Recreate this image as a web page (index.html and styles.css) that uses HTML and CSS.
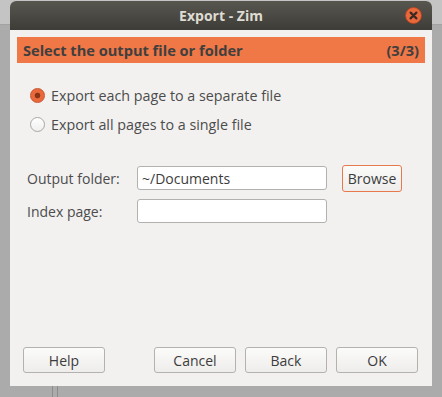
FILE: index.html
```html
<!DOCTYPE html>
<html>
<head>
  <meta charset="utf-8">
  <title>Export - Zim</title>
  <link rel="stylesheet" href="styles.css">
</head>
<body>

<div class="desk">
  <div class="dialog">

    <!-- title bar -->
    <div class="titlebar">
      <span class="title">Export - Zim</span>
      <span class="close">
        <svg width="17" height="17" viewBox="0 0 17 17">
          <circle cx="8.5" cy="8.5" r="8" fill="#e9683c" stroke="#b8421c" stroke-width="0.8"/>
          <path d="M5.6 5.6 L11.4 11.4 M11.4 5.6 L5.6 11.4" stroke="#3a2a22" stroke-width="2.2" stroke-linecap="round"/>
        </svg>
      </span>
    </div>

    <div class="body">
      <div class="banner">
        <span>Select the output file or folder</span>
        <span>(3/3)</span>
      </div>

      <div class="choices">
        <label class="choice"><span class="radio on"></span>Export each page to a separate file</label>
        <label class="choice"><span class="radio"></span>Export all pages to a single file</label>
      </div>

      <div class="form">
        <div class="row">
          <span class="lbl">Output folder:</span>
          <div class="entry">~/Documents</div>
          <div class="btn browse">Browse</div>
        </div>
        <div class="row">
          <span class="lbl">Index page:</span>
          <div class="entry"></div>
        </div>
      </div>

      <div class="actions">
        <div class="btn">Help</div>
        <div class="spacer"></div>
        <div class="btn">Cancel</div>
        <div class="btn">Back</div>
        <div class="btn">OK</div>
      </div>
    </div>

  </div>
  <div class="under"></div>
</div>

</body>
</html>
```

FILE: styles.css
```css
body {
  margin: 0;
  background: #ababab;
  font-family: "Open Sans", "DejaVu Sans", sans-serif;
  color: #4c4c4c;
}

.desk {
  padding: 1px 10px 0 10px;
  height: 396px;
  background: linear-gradient(#c4c4c4 0, #c4c4c4 24px, #a3a3a3 24px, #a3a3a3 25px, #ababab 25px);
}

.dialog {
  width: 422px;
  background: #f2f1f0;
  border-radius: 6px 6px 0 0;
  overflow: hidden;
}

.titlebar {
  height: 29px;
  background: linear-gradient(#57564f, #3d3c37);
  display: flex;
  align-items: center;
  justify-content: center;
  position: relative;
}
.title {
  color: #dfdbd2;
  font-weight: bold;
  font-size: 14px;
}
.close {
  position: absolute;
  right: 10px;
  top: 6px;
  height: 17px;
}

.body {
  padding: 7px 7px 13px 7px;
}

.banner {
  background: #f07746;
  height: 26px;
  display: flex;
  align-items: center;
  justify-content: space-between;
  padding: 0 6px;
  font-weight: bold;
  font-size: 14.6px;
  color: #3f3f3f;
}

.choices {
  padding: 23px 0 0 13px;
  display: flex;
  flex-direction: column;
  gap: 11px;
}
.choice {
  display: flex;
  align-items: center;
  font-size: 14.3px;
  height: 18px;
}
.radio {
  width: 15px;
  height: 15px;
  border-radius: 50%;
  border: 1px solid #a9a6a3;
  background: linear-gradient(#ffffff, #f0efee);
  margin-right: 6px;
  box-sizing: border-box;
}
.radio.on {
  border-color: #c8532a;
  background: radial-gradient(circle, #8a3316 0, #8a3316 2.5px, #e9693d 3.2px);
}

.form {
  padding: 33px 0 0 10px;
  display: flex;
  flex-direction: column;
  gap: 9px;
}
.row {
  display: flex;
  align-items: center;
  height: 24px;
}
.lbl {
  width: 110px;
  font-size: 14px;
}
.entry {
  width: 190px;
  height: 24px;
  box-sizing: border-box;
  border: 1px solid #b3b1ae;
  border-radius: 3px;
  background: #fff;
  font-size: 14px;
  padding: 2px 4px;
  color: #3c3c3c;
}

.btn {
  box-sizing: border-box;
  border: 1px solid #b4b1ae;
  border-radius: 3px;
  background: linear-gradient(#fbfbfa, #eeedec);
  font-size: 14px;
  display: flex;
  align-items: center;
  justify-content: center;
  color: #3c3c3c;
}
.browse {
  margin-left: 15px;
  width: 60px;
  height: 27px;
  border-color: #e8794d;
}

.actions {
  margin-top: 124px;
  display: flex;
  padding: 0 7px 0 6px;
  gap: 9px;
}
.actions .btn {
  width: 82px;
  height: 26px;
}
.spacer {
  flex: 1;
}

.under {
  margin-left: 42px;
  width: 4px;
  height: 11px;
  border-left: 1px solid #8c8c8c;
  border-right: 1px solid #8c8c8c;
}
```
